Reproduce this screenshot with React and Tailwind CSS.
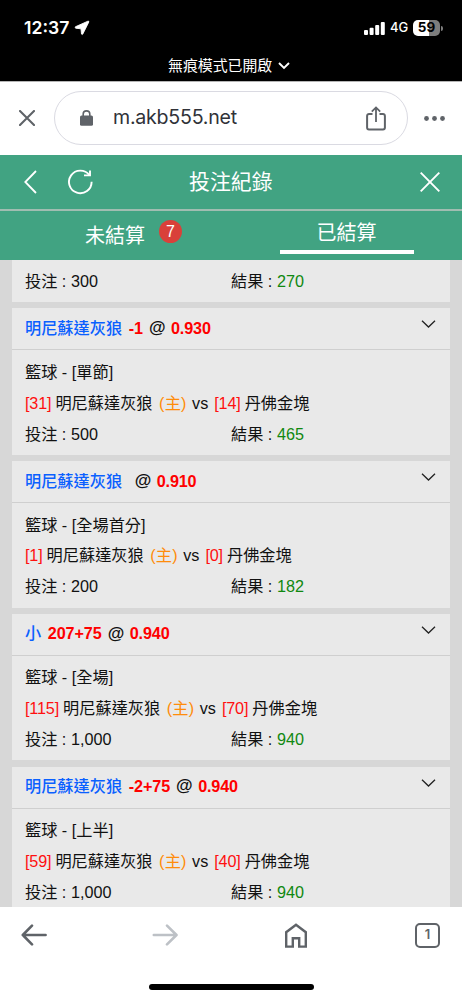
import React, { useState } from "react";

const bets = [
  {
    id: 1,
    pick: "明尼蘇達灰狼",
    line: "-1",
    odds: "0.930",
    period: "單節",
    home: 31,
    away: 14,
    stake: "500",
    result: "465",
  },
  {
    id: 2,
    pick: "明尼蘇達灰狼",
    line: "",
    odds: "0.910",
    period: "全場首分",
    home: 1,
    away: 0,
    stake: "200",
    result: "182",
  },
  {
    id: 3,
    pick: "小",
    line: "207+75",
    odds: "0.940",
    period: "全場",
    home: 115,
    away: 70,
    stake: "1,000",
    result: "940",
  },
  {
    id: 4,
    pick: "明尼蘇達灰狼",
    line: "-2+75",
    odds: "0.940",
    period: "上半",
    home: 59,
    away: 40,
    stake: "1,000",
    result: "940",
  },
];

function StatusBar() {
  return (
    <div className="h-[81px] shrink-0 bg-black text-white">
      <div className="flex h-[54px] items-center pl-[24px] pr-[19px] pt-[2px]">
        <span className="w-[47px] whitespace-nowrap text-[17.6px] font-semibold">
          12:37
        </span>
        <svg className="ml-[3px]" width="16" height="16" viewBox="0 0 16 16" fill="#fff" stroke="#fff" strokeWidth="0.9">
          <path d="M13.9 1.2 L1.4 6.8 Q0.6 7.6 1.8 8.2 L7 8.8 L7.5 14 Q8.2 15.1 8.8 14 L14.8 2 Q15 0.8 13.9 1.2Z" />
        </svg>

        <svg className="ml-auto" width="21" height="13" viewBox="0 0 21 13" fill="#fff">
          <rect x="0" y="8" width="4" height="5" rx="1" />
          <rect x="5.6" y="5.8" width="4" height="7.2" rx="1" />
          <rect x="11.2" y="3" width="4" height="10" rx="1" />
          <rect x="16.8" y="0" width="4" height="13" rx="1" />
        </svg>
        <span className="ml-[5px] w-[23px] text-[13px] font-medium">4G</span>
        <div className="flex h-[16px] w-[27px] items-center justify-center rounded-[5px] bg-linear-to-r from-white from-60% to-[#7d7d7d] to-60% text-[13.5px] font-bold leading-none text-black">
          59
        </div>
        <div className="ml-[1px] h-[5px] w-[2px] rounded-r-full bg-[#7d7d7d]" />
      </div>
      <div className="flex h-[24px] items-center pl-[168px] text-[14.9px] leading-none">
        <span>無痕模式已開啟</span>
        <svg className="ml-[6px]" width="12" height="8" viewBox="0 0 12 8" fill="none" stroke="#fff" strokeWidth="1.9">
          <path d="M1 1 L6 6 L11 1" />
        </svg>
      </div>
    </div>
  );
}

function AddressBar() {
  return (
    <div className="flex h-[74px] shrink-0 items-center border-t border-[#b5b5b5] bg-white pb-[1px] pl-[19px] pr-[17px] text-[#5f6368]">
      <svg width="16" height="16" viewBox="0 0 16 16" fill="none" stroke="#5f6368" strokeWidth="2.1" strokeLinecap="round">
        <path d="M1 1 L15 15 M15 1 L1 15" />
      </svg>
      <div className="ml-[19px] flex h-[54px] w-[354px] items-center rounded-full border border-[#dadae2] pl-[25px] pr-[21px]">
        <svg width="13" height="16" viewBox="0 0 13 16">
          <rect x="0" y="5.6" width="13" height="10.2" rx="1.6" fill="#5f6368" />
          <path d="M3.2 6 V4 a3.3 3.1 0 0 1 6.6 0 V6" fill="none" stroke="#5f6368" strokeWidth="1.6" />
        </svg>
        <span className="ml-[20px] whitespace-nowrap text-[19.6px] tracking-[-0.25px] text-[#303238]">
          m.akb555.net
        </span>
        <svg className="ml-auto" width="20" height="25" viewBox="0 0 20 25" fill="none" stroke="#5f6368" strokeWidth="2">
          <path d="M6.5 8 H3 a1.9 1.9 0 0 0 -1.9 1.9 V21.6 a1.9 1.9 0 0 0 1.9 1.9 H17 a1.9 1.9 0 0 0 1.9 -1.9 V9.9 A1.9 1.9 0 0 0 17 8 H13.5" />
          <path d="M10 16 V1.8 M5.8 5.6 L10 1.4 L14.2 5.6" strokeWidth="1.8" />
        </svg>
      </div>
      <svg className="ml-auto" width="21" height="5" viewBox="0 0 21 5" fill="#5f6368">
        <circle cx="2.5" cy="2.5" r="2.4" />
        <circle cx="10.5" cy="2.5" r="2.4" />
        <circle cx="18.5" cy="2.5" r="2.4" />
      </svg>
    </div>
  );
}

function PageHeader() {
  return (
    <div className="flex h-[56px] shrink-0 items-center border-b-2 border-[#a0bdb1] bg-[#41a382] pl-[24px] pr-[22px] text-white">
      <svg width="13" height="24" viewBox="0 0 13 24" fill="none" stroke="#fff" strokeWidth="1.8">
        <path d="M12 1 L1.3 12 L12 23" />
      </svg>
      <svg className="ml-[31px]" width="25" height="26" viewBox="0 0 25 26" fill="none" stroke="#fff" strokeWidth="1.9">
        <path d="M23.6 12.8 A11.3 11.3 0 1 1 21.4 6.2" />
        <path d="M16 6.4 H22 V1.6" />
      </svg>
      <h1 className="ml-[96px] text-[20.9px] leading-none">投注紀錄</h1>
      <svg className="ml-auto" width="20" height="20" viewBox="0 0 20 20" fill="none" stroke="#fff" strokeWidth="1.9">
        <path d="M0.7 0.7 L19.3 19.3 M19.3 0.7 L0.7 19.3" />
      </svg>
    </div>
  );
}

function Tabs({ tab, setTab }) {
  return (
    <div className="flex h-[49px] shrink-0 bg-[#41a382] text-[20px] leading-none text-white">
      <button className="flex w-1/2 items-start pl-[85px]" onClick={() => setTab("open")}>
        <span className="pt-[15px]">未結算</span>
        <span className="ml-[14px] mt-[9px] flex size-[23px] items-center justify-center rounded-full bg-[#d9403a] font-['Liberation_Sans',sans-serif] text-[16px]">
          7
        </span>
      </button>
      <button className="flex w-1/2 justify-center" onClick={() => setTab("settled")}>
        <span
          className={
            tab === "settled"
              ? "h-[43px] w-[134px] border-b-4 border-white pt-[12px]"
              : "h-[43px] w-[134px] pt-[12px]"
          }
        >
          已結算
        </span>
      </button>
    </div>
  );
}

function StakeRow({ stake, result }) {
  return (
    <div className="flex">
      <span className="w-[206px]">投注 : {stake}</span>
      <span>
        結果 : <span className="text-[#108810]">{result}</span>
      </span>
    </div>
  );
}

function BetCard({ bet }) {
  return (
    <div className="mb-[6.2px] h-[146.5px] shrink-0 bg-[#e9e9e9] text-[16.2px]">
      <div className="flex h-[42px] justify-between border-b-[1.5px] border-[#cfcfcf] pl-[13px] pr-[14px]">
        <div className="flex h-[39px] items-center whitespace-nowrap font-bold">
          <span className="font-medium text-[#0a60ff]">{bet.pick}</span>
          {bet.line && (
            <span className="ml-[6.6px] tracking-[-0.1px] text-[#ff0000]">{bet.line}</span>
          )}
          <span className={bet.line ? "ml-[6px] text-[17px]" : "ml-[12.5px] text-[17px]"}>@</span>
          <span className="ml-[5.5px] tracking-[-0.15px] text-[#ff0000]">{bet.odds}</span>
        </div>
        <svg className="mt-[12px]" width="15" height="8" viewBox="0 0 15 8" fill="none" stroke="#222" strokeWidth="1.3">
          <path d="M1 0.8 L7.5 7 L14 0.8" />
        </svg>
      </div>
      <div className="pl-[13px] pt-[6.5px] leading-[30.8px] whitespace-nowrap">
        <div>籃球 - [{bet.period}]</div>
        <div className="flex">
          <span className="tracking-[-0.15px] text-[#ff1010]">[{bet.home}]</span>
          <span className="ml-[4px]">明尼蘇達灰狼</span>
          <span className="ml-[6.5px] w-[27px] text-[#ff8c0a]">
            (<span className="mx-[0.2px]">主</span>)
          </span>
          <span className="ml-[6px]">vs</span>
          <span className="ml-[6px] tracking-[-0.15px] text-[#ff1010]">[{bet.away}]</span>
          <span className="ml-[4px]">丹佛金塊</span>
        </div>
        <StakeRow stake={bet.stake} result={bet.result} />
      </div>
    </div>
  );
}

function BottomBar() {
  return (
    <div className="flex h-[93px] shrink-0 flex-col items-center bg-white">
      <div className="flex h-[56px] w-full items-center pl-[21px] pr-[22px]">
        <svg width="26" height="22" viewBox="0 0 26 22" fill="none" stroke="#5f6368" strokeWidth="2.6" strokeLinecap="round" strokeLinejoin="round">
          <path d="M24.6 11 H1.8 M11 1.6 L1.8 11 L11 20.4" />
        </svg>
        <svg className="ml-[105px]" width="26" height="22" viewBox="0 0 26 22" fill="none" stroke="#bdc1c6" strokeWidth="2.6" strokeLinecap="round" strokeLinejoin="round">
          <path d="M1.8 11 H24 M15 1.6 L24.5 11 L15 20.4" />
        </svg>
        <svg className="ml-[107px]" width="22" height="25" viewBox="0 0 22 25" fill="none" stroke="#5f6368" strokeWidth="2.4">
          <path d="M1.2 23.6 V9.2 L11 1.7 L20.8 9.2 V23.6 H14.2 V15.2 H7.8 V23.6 Z" />
        </svg>
        <div className="ml-auto flex size-[25px] items-center justify-center rounded-[5px] border-2 border-[#5f6368] text-[13px] font-semibold text-[#5f6368]">
          1
        </div>
      </div>
      <div className="mt-[21px] h-[6px] w-[165px] rounded-full bg-black" />
    </div>
  );
}

export default function App() {
  const [tab, setTab] = useState("settled");

  return (
    <div className="flex h-[1000px] w-[462px] flex-col overflow-hidden bg-white font-['Inter','Noto_Sans_CJK_TC',sans-serif]">
      <StatusBar />
      <AddressBar />
      <PageHeader />
      <Tabs tab={tab} setTab={setTab} />

      {/* Settled bets */}
      <div className="flex min-h-0 flex-1 flex-col overflow-hidden bg-[#d7d7d7] px-[12px] font-['Liberation_Sans','Noto_Sans_CJK_TC',sans-serif] text-[#111]">
        <div className="mb-[6.2px] h-[42.3px] shrink-0 bg-[#e9e9e9] pl-[13px] pt-[5.5px] text-[16.2px] leading-[30.8px]">
          <StakeRow stake="300" result="270" />
        </div>
        {bets.map((bet) => (
          <BetCard key={bet.id} bet={bet} />
        ))}
      </div>

      <BottomBar />
    </div>
  );
}
